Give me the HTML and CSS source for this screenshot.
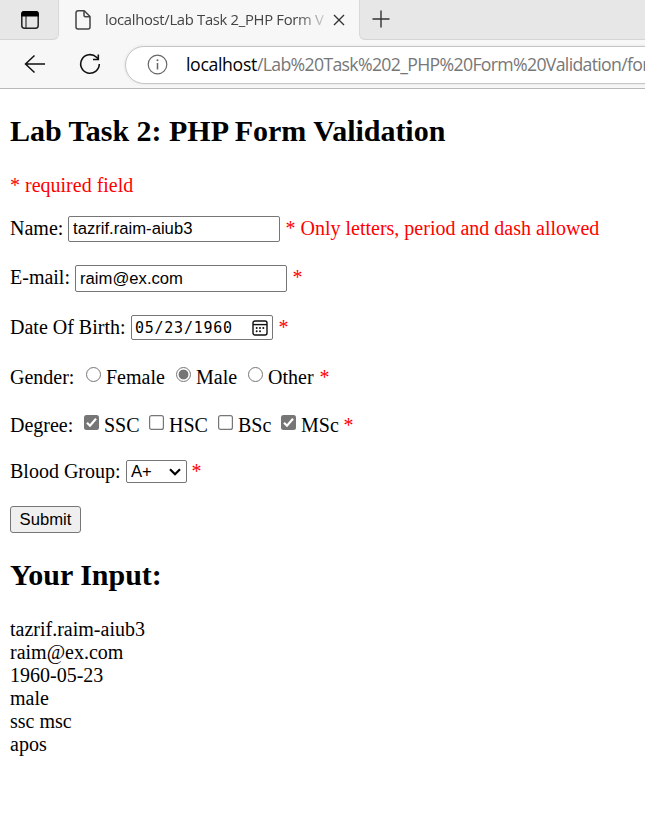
FILE: index.html
```
<!DOCTYPE html>
<html lang="en">
<head>
<meta charset="utf-8">
<title>Lab Task 2_PHP Form Validation</title>
<link rel="stylesheet" href="styles.css">
</head>
<body>
<header class="browser">
  <div class="tabs">
    <div class="tab-actions">
      <svg width="20" height="20" viewBox="0 0 20 20" fill="none" stroke="#222" stroke-width="1.5"><rect x="1.8" y="1.8" width="16.4" height="16.4" rx="2.6"/><path d="M6 6v12" stroke-width="1.1"/><path d="M1.2 6.4V4a3 3 0 0 1 3-3h11.6a3 3 0 0 1 3 3v2.4z" fill="#000" stroke="none"/></svg>
    </div>
    <div class="tab">
      <svg width="18" height="22" viewBox="0 0 18 22" fill="none" stroke="#444" stroke-width="1.5" stroke-linejoin="round"><path d="M4 1.8h6.2L16 7.5V18a2 2 0 0 1-2 2H4a2 2 0 0 1-2-2V3.800a2 2 0 0 1 2-2z"/><path d="M10 2v4.200a1.500 1.500 0 0 0 1.500 1.500H16"/></svg>
      <span class="tab-title">localhost/Lab Task 2_PHP Form V</span>
      <svg class="close" width="12" height="12" viewBox="0 0 12 12" stroke="#333" stroke-width="1.4"><path d="M1 1l10 10M11 1L1 11"/></svg>
    </div>
    <div class="new-tab">
      <svg width="18" height="18" viewBox="0 0 18 18" stroke="#333" stroke-width="1.4"><path d="M9 .5v17M.5 9h17"/></svg>
    </div>
  </div>
  <div class="toolbar">
    <svg class="back" width="22" height="20" viewBox="0 0 22 20" fill="none" stroke="#111" stroke-width="1.5"><path d="M10.500 1.500L1.500 10l9 8.500M1.500 10H21"/></svg>
    <svg class="reload" width="22" height="22" viewBox="0 0 22 22" fill="none" stroke="#111" stroke-width="1.6"><path d="M20.300 11A9.300 9.300 0 1 1 17.500 4.300L19.500 6.300"/><path d="M19.300 1.500V6.500H14"/></svg>
    <div class="address">
      <svg width="21" height="21" viewBox="0 0 21 21" fill="none" stroke="#666" stroke-width="1.2"><circle cx="10.500" cy="10.500" r="9.300"/><path d="M10.500 9v6.500" stroke-width="1.500"/><circle cx="10.500" cy="6.300" r="1" fill="#666" stroke="none"/></svg>
      <span class="url"><b>localhost</b>/Lab%20Task%202_PHP%20Form%20Validation/for</span>
    </div>
  </div>
</header>
<main>
  <h2>Lab Task 2: PHP Form Validation</h2>
  <p class="note error">* required field</p>
  <form>
    <div class="row"><label class="label-name" for="name">Name:</label><input class="text" id="name" type="text" value="tazrif.raim-aiub3"><span class="error">* Only letters, period and dash allowed</span></div>
    <div class="row"><label class="label-email" for="email">E-mail:</label><input class="text email" id="email" type="text" value="raim@ex.com"><span class="error">*</span></div>
    <div class="row"><span class="label-dob">Date Of Birth:</span><div class="date"><span>05/23/1960</span><svg width="16" height="16" viewBox="0 0 16 16" fill="none" stroke="#111" stroke-width="1.400"><rect x="1" y="1" width="14" height="14" rx="2"/><path d="M1 4.600h14"/><g fill="#111" stroke="none"><circle cx="4.700" cy="8" r="1"/><circle cx="8" cy="8" r="1"/><circle cx="11.300" cy="8" r="1"/><circle cx="4.700" cy="11.300" r="1"/><circle cx="8" cy="11.300" r="1"/></g></svg></div><span class="error">*</span></div>
    <div class="row"><span class="label-gender">Gender:</span><i class="radio"></i><span class="female">Female</span><i class="radio selected"></i><span class="male">Male</span><i class="radio"></i><span class="other">Other</span><span class="error">*</span></div>
    <div class="row"><span class="label-degree">Degree:</span><svg class="check" viewBox="0 0 15 15"><use href="#on"/></svg><span class="ssc">SSC</span><svg class="check" viewBox="0 0 15 15"><use href="#off"/></svg><span class="hsc">HSC</span><svg class="check" viewBox="0 0 15 15"><use href="#off"/></svg><span class="bsc">BSc</span><svg class="check" viewBox="0 0 15 15"><use href="#on"/></svg><span class="msc">MSc</span><span class="error">*</span></div>
    <div class="row"><span class="label-blood">Blood Group:</span><div class="select"><span>A+</span><svg width="12" height="8" viewBox="0 0 12 8" fill="none" stroke="#000" stroke-width="2.200"><path d="M1 1.300l5 5 5-5"/></svg></div><span class="error">*</span></div>
    <button type="button">Submit</button>
  </form>
  <h2 class="result-title">Your Input:</h2>
  <div class="results">tazrif.raim-aiub3<br>raim@ex.com<br>1960-05-23<br>male<br>ssc msc<br>apos</div>
</main>
<svg class="defs" width="0" height="0">
  <symbol id="on" viewBox="0 0 15 15"><rect width="15" height="15" rx="2.500" fill="#767676"/><path d="M3 7.700l3 3 6-7" fill="none" stroke="#fff" stroke-width="2.200"/></symbol>
  <symbol id="off" viewBox="0 0 15 15"><rect x=".6" y=".6" width="13.800" height="13.800" rx="2" fill="#fff" stroke="#767676" stroke-width="1.200"/></symbol>
</svg>
</body>
</html>
```
FILE: styles.css
```
* { box-sizing: border-box; }
body { margin: 0; height: 817px; overflow: hidden; background: #fff; color: #000; font: 20px/23px "Liberation Serif", serif; }
svg { display: block; flex: none; }
.defs { position: absolute; }
.browser { height: 89px; background: #f7f7f7; border-bottom: 1px solid #b9b9b9; font-family: "Open Sans", sans-serif; }
.tabs { height: 40px; display: flex; background: #f7f7f7; }
.tab-actions { width: 59px; height: 40px; padding: 10px 0 0 20px; background: #e7e7e7; border-bottom: 1px solid #d5d5d5; border-right: 1px solid #d9d9d9; border-bottom-right-radius: 6px; }
.tab { width: 300px; display: flex; align-items: center; padding-left: 15px; background: #f7f7f7; }
.tab-title { width: 220px; margin: -1px 0 0 13px; overflow: hidden; white-space: nowrap; color: #444; font-size: 14.8px; letter-spacing: -.3px; -webkit-mask-image: linear-gradient(90deg, #000 87%, transparent 103%); mask-image: linear-gradient(90deg, #000 87%, transparent 103%); }
.close { margin-left: 8px; }
.new-tab { flex: 1; height: 40px; padding: 10px 0 0 12px; background: #e7e7e7; border-bottom: 1px solid #d5d5d5; border-left: 1px solid #d9d9d9; border-bottom-left-radius: 6px; }
.toolbar { height: 48px; display: flex; align-items: center; padding-left: 24px; }
.reload { margin-left: 33px; }
.address { flex: 1; min-width: 0; height: 38px; margin: 1px -4px 0 24px; padding-left: 21px; display: flex; align-items: center; overflow: hidden; background: #fff; border: 1px solid #c6c6c6; border-radius: 19px 0 0 19px; box-shadow: 0 0 3px #ddd; }
.url { margin: -1px 0 0 18px; white-space: nowrap; color: #777; font-size: 17.7px; letter-spacing: -.68px; }
.url b { color: #000; font-weight: 400; letter-spacing: -.35px; }
main { padding: 24px 10px 0; }
h2 { margin: 0; font-size: 30px; line-height: 35px; letter-spacing: -.02px; }
.note { margin: 26px 0 0; }
.error { color: #f00; white-space: nowrap; }
form { margin-top: 19px; display: grid; grid-template-rows: 49px 50px 50px 48px 46px 47px 28px; }
.row { display: flex; align-items: flex-start; white-space: nowrap; }
.row > * { flex: none; }
.row > span, .row > label { padding-top: 1px; }
.row > .error { margin-left: -.5px; }
.label-name { width: 58px; }
.label-email { width: 65px; }
.label-dob { width: 121px; }
.label-gender { width: 76px; }
.label-degree { width: 74px; }
.label-blood { width: 116px; }
.text { width: 212px; height: 26px; margin: 0 6px 0 0; padding: 0 4px 1px; border: 1px solid #767676; border-radius: 2px; background: #fff; color: #000; font: 16.67px "Liberation Sans", sans-serif; }
.email { height: 27px; padding-bottom: 0; }
.date { width: 142px; height: 25px; margin-right: 6px; padding: 0 4px 0 3px; display: flex; align-items: center; justify-content: space-between; border: 1px solid #767676; border-radius: 2px; font: 15px "DejaVu Sans Mono", monospace; letter-spacing: .75px; }
.radio { width: 15px; height: 15px; margin-top: 2px; border: 1px solid #767676; border-radius: 50%; background: #fff; }
.selected { background: radial-gradient(circle, #767676 4.500px, #fff 5.300px); }
.female, .male, .other { margin-left: 5px; }
.female { width: 70px; }
.male { width: 52px; }
.other { width: 52px; }
.check { width: 15px; height: 15px; margin-top: 2px; }
.ssc, .hsc, .bsc, .msc { margin-left: 5px; }
.ssc { width: 45px; }
.hsc { width: 49px; }
.bsc { width: 43px; }
.msc { width: 43px; }
.select { width: 61px; height: 23px; margin: 1px 5px 0 0; padding: 0 5px 0 4px; display: flex; align-items: center; justify-content: space-between; border: 1px solid #767676; border-radius: 2px; font: 16.67px "Liberation Sans", sans-serif; }
button { width: 71px; height: 27px; padding: 0; border: 1px solid #767676; border-radius: 3px; background: #efefef; color: #000; font: 16.67px "Liberation Sans", sans-serif; }
.result-title { margin-top: 23px; }
.results { margin-top: 26px; }
```
